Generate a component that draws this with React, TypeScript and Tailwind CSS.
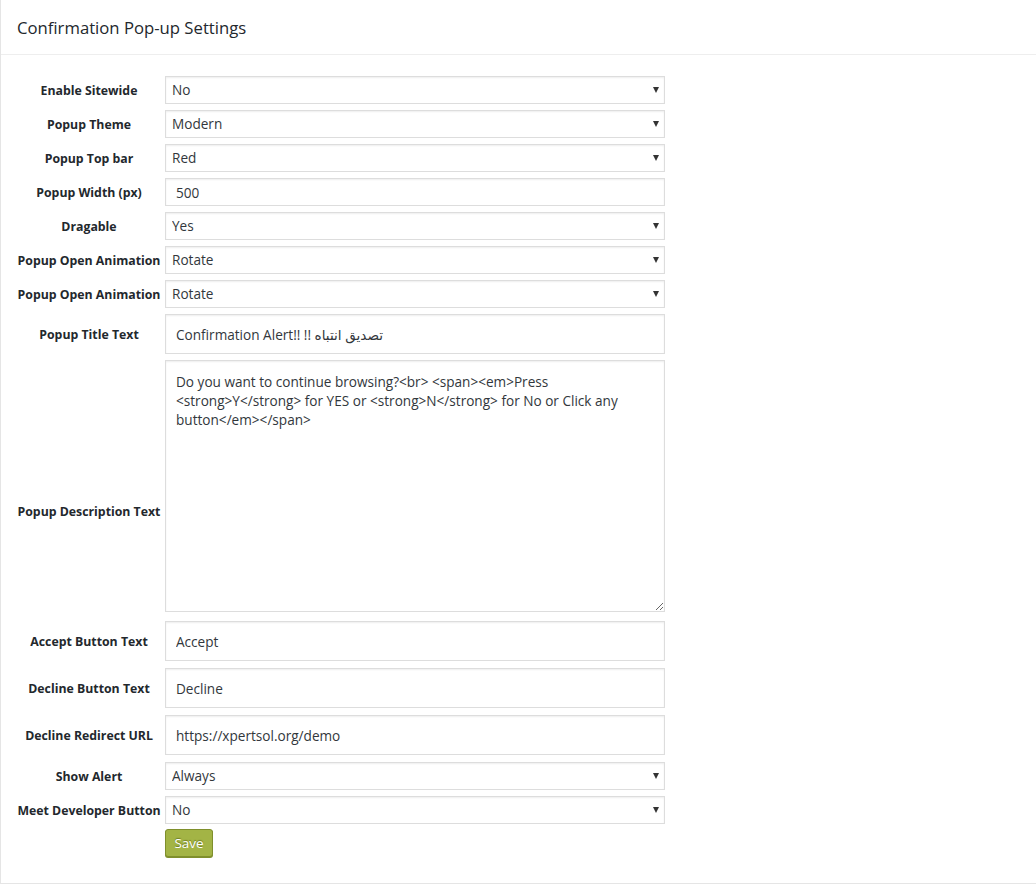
import React from "react";

const font = { fontFamily: '"Open Sans", "DejaVu Sans", sans-serif' };

function Label({ children, className = "" }: { children: React.ReactNode; className?: string }) {
  return (
    <div className={`w-[164px] shrink-0 pl-3 pt-[2px] text-center text-[12.3px] font-bold text-[#23282d] ${className}`}>
      {children}
    </div>
  );
}

function Select({ value }: { value: string }) {
  return (
    <div className="relative w-[500px]">
      <select
        defaultValue={value}
        className="block h-[28px] w-full appearance-none rounded-none border border-[#dddddd] bg-white pl-[6px] text-[13.6px] text-[#32373c] shadow-[inset_0_1px_2px_rgba(0,0,0,0.07)] outline-none"
        style={font}
      >
        <option>{value}</option>
      </select>
      <span className="pointer-events-none absolute right-[6px] top-[11px] h-0 w-0 border-x-[3.5px] border-t-[6px] border-x-transparent border-t-[#333]" />
    </div>
  );
}

function Input({ value, tall = true, className = "" }: { value: string; tall?: boolean; className?: string }) {
  return (
    <input
      defaultValue={value}
      className={`block w-[500px] rounded-none border border-[#dddddd] bg-white text-[13.6px] text-[#32373c] shadow-[inset_0_1px_2px_rgba(0,0,0,0.07)] outline-none ${tall ? "h-[40px] px-[10px]" : "h-[28px] px-[10px]"} ${className}`}
      style={font}
    />
  );
}

export default function App() {
  const desc =
    "Do you want to continue browsing?<br> <span><em>Press <strong>Y</strong> for YES or <strong>N</strong> for No or Click any button</em></span>";
  return (
    <div className="min-h-[884px] bg-white" style={font}>
      <div className="w-[1040px] border-b border-l border-[#e5e5e5] bg-white pb-[26px]">
        <div className="flex h-[55px] items-center border-b border-[#eeeeee] px-4 pt-[2px]">
          <h2 className="text-[16.7px] font-normal text-[#23282d]">Confirmation Pop-up Settings</h2>
        </div>
        <div className="flex flex-col">
          <div className="mt-[21px] flex items-center">
            <Label>Enable Sitewide</Label>
            <Select value="No" />
          </div>
          <div className="mt-[6px] flex items-center">
            <Label>Popup Theme</Label>
            <Select value="Modern" />
          </div>
          <div className="mt-[6px] flex items-center">
            <Label>Popup Top bar</Label>
            <Select value="Red" />
          </div>
          <div className="mt-[6px] flex items-center">
            <Label>Popup Width (px)</Label>
            <Input value="500" tall={false} />
          </div>
          <div className="mt-[6px] flex items-center">
            <Label>Dragable</Label>
            <Select value="Yes" />
          </div>
          <div className="mt-[6px] flex items-center">
            <Label>Popup Open Animation</Label>
            <Select value="Rotate" />
          </div>
          <div className="mt-[6px] flex items-center">
            <Label>Popup Open Animation</Label>
            <Select value="Rotate" />
          </div>
          <div className="mt-[6px] flex items-center">
            <Label>Popup Title Text</Label>
            <Input value="Confirmation Alert!! !! تصديق انتباه" />
          </div>
          <div className="mt-[6px] flex items-start">
            <Label className="pt-[143px]">Popup Description Text</Label>
            <textarea
              defaultValue={desc}
              className="block h-[252px] w-[500px] rounded-none border border-[#dddddd] bg-white px-[10px] py-[11px] text-[13.6px] leading-[19px] text-[#32373c] shadow-[inset_0_1px_2px_rgba(0,0,0,0.07)] outline-none"
              style={font}
            />
          </div>
          <div className="mt-[9px] flex items-center">
            <Label>Accept Button Text</Label>
            <Input value="Accept" />
          </div>
          <div className="mt-[7px] flex items-center">
            <Label>Decline Button Text</Label>
            <Input value="Decline" />
          </div>
          <div className="mt-[7px] flex items-center">
            <Label>Decline Redirect URL</Label>
            <Input value="https://xpertsol.org/demo" />
          </div>
          <div className="mt-[7px] flex items-center">
            <Label>Show Alert</Label>
            <Select value="Always" />
          </div>
          <div className="mt-[6px] flex items-center">
            <Label>Meet Developer Button</Label>
            <Select value="No" />
          </div>
          <div className="mt-[5px] flex">
            <div className="w-[164px] shrink-0" />
            <button
              className="h-[28px] w-[48px] rounded-[3px] border border-[#7f8f2c] bg-[#a3b445] text-[13.5px] text-white shadow-[0_1px_0_#7f8f2c] [text-shadow:0_-1px_1px_#6b7a22]"
              style={font}
            >
              Save
            </button>
          </div>
        </div>
      </div>
    </div>
  );
}
